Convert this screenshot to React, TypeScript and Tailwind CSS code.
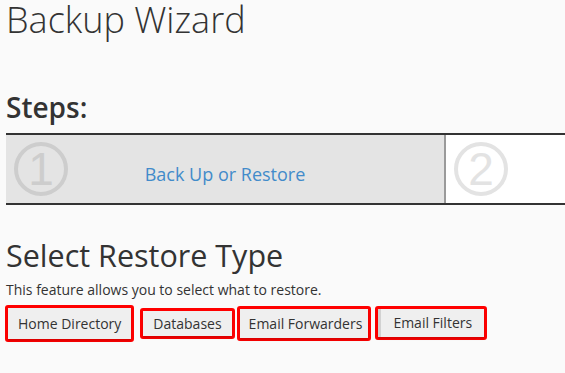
import React from "react";

type Step = {
  num: string;
  label?: string;
  active?: boolean;
};

const steps: Step[] = [
  { num: "1", label: "Back Up or Restore", active: true },
  { num: "2" },
];

const restoreTypes = [
  { label: "Home Directory", ring: "ml-[-1px] mr-[6px] h-[37px]", pad: "px-[10px]" },
  { label: "Databases", ring: "mr-[2px] mt-[3px] h-[31px]", pad: "px-[10px]" },
  { label: "Email Forwarders", ring: "mr-[4px] mt-[1px] h-[35px]", pad: "pl-[9px] pr-[6px]" },
  { label: "Email Filters", ring: "mt-[1px] h-[34px]", pad: "pl-[12px] pr-[12px] border-l-[3px] border-[#d2d2d2]" },
];

const StepCell: React.FC<{ step: Step }> = ({ step }) => (
  <div
    className={
      step.active
        ? "grid h-[68px] w-[440px] shrink-0 border-r-2 border-[#9a9a9a] bg-[#e4e4e4]"
        : "grid h-[68px] flex-1 bg-white"
    }
  >
    <div
      className={
        "col-start-1 row-start-1 ml-[8px] flex h-[54px] w-[54px] items-center justify-center self-center justify-self-start rounded-full border-[4px] " +
        (step.active ? "border-[#cdcdcd] text-[#cdcdcd]" : "border-[#e3e3e3] text-[#e3e3e3]")
      }
    >
      <span className="font-['Liberation_Sans',sans-serif] text-[46px] leading-none">{step.num}</span>
    </div>
    {step.label && (
      <span className="col-start-1 row-start-1 mt-[11px] self-center justify-self-center text-[18px] text-[#428bca]">
        {step.label}
      </span>
    )}
  </div>
);

export default function App() {
  return (
    <div className="min-h-screen overflow-hidden bg-[#fafafa] px-[6px] font-['Open_Sans',sans-serif] text-[#333]">
      <h1 className="text-[36px] leading-[1.1] font-light">Backup Wizard</h1>

      <h2 className="mt-[52px] text-[28px] leading-[1.1] font-semibold">Steps:</h2>

      <div className="-mr-[6px] mt-[11px] flex border-y-2 border-[#333]">
        {steps.map((s) => (
          <StepCell key={s.num} step={s} />
        ))}
      </div>

      <h2 className="mt-[34px] text-[30.5px] leading-[1.1] font-medium">Select Restore Type</h2>
      <p className="mt-[7px] text-[14px] leading-[1.4]">This feature allows you to select what to restore.</p>

      <div className="mt-[5px] flex items-start">
        {restoreTypes.map((t) => (
          <div key={t.label} className={"flex rounded-[3px] border-[3px] border-[#ff0000] " + t.ring}>
            <button
              type="button"
              className={"flex-1 bg-[#efefef] text-[14px] text-[#333] shadow-[0_2px_2px_rgba(0,0,0,0.15)] " + t.pad}
            >
              {t.label}
            </button>
          </div>
        ))}
      </div>
    </div>
  );
}
